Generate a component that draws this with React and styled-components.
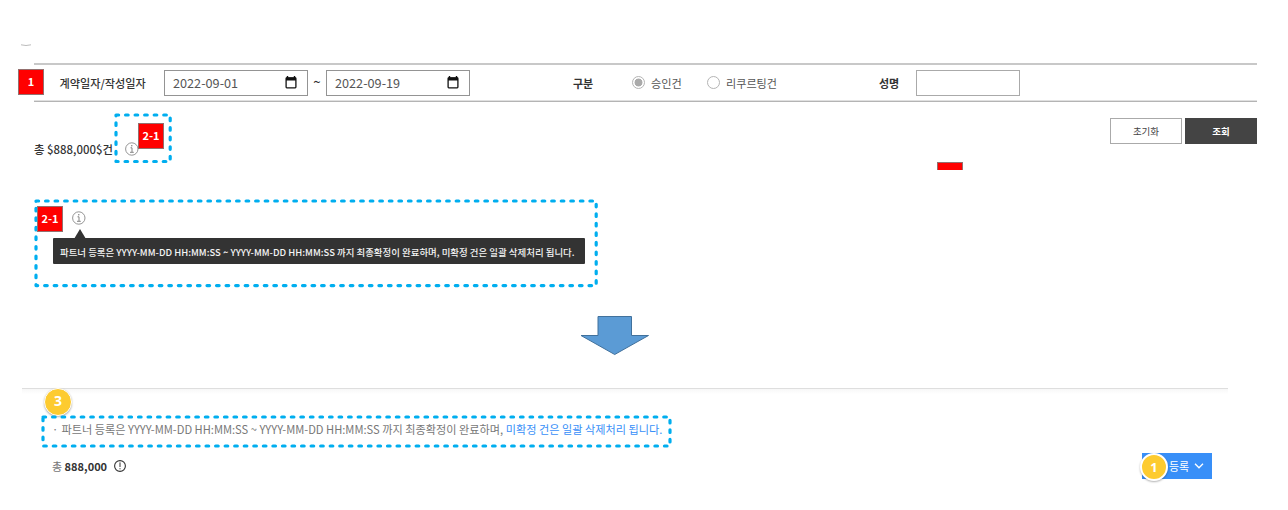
import React from "react";
import styled, { createGlobalStyle } from "styled-components";

const Global = createGlobalStyle`
  * { box-sizing: border-box; }
  body { margin: 0; background: #fff; }
`;

const Page = styled.main`
  position: relative;
  width: 1288px;
  height: 510px;
  overflow: hidden;
  display: flex;
  flex-direction: column;
  font-family: "Noto Sans CJK KR", "Noto Sans", sans-serif;
  font-size: 11px;
  color: #333;
`;

const Text = styled.span`
  white-space: pre;
  font-size: ${(p) => p.$size || 11}px;
  font-weight: ${(p) => p.$weight || 400};
  color: ${(p) => p.$color || "#333"};
  letter-spacing: ${(p) => p.$track || 0}px;
  line-height: 16px;
`;

const Cropped = styled.div`
  height: 63px;
  padding: 44px 0 0 21px;
`;

const FilterBar = styled.section`
  display: flex;
  align-items: center;
  width: 1223px;
  height: 39px;
  margin-left: 34px;
  padding-bottom: 1px;
  border-top: 2px solid #c8c8c8;
  border-bottom: 1px solid #b4b4b4;
  box-shadow: inset 0 -1px #e0e0e0;
`;

const Label = styled(Text)`
  width: ${(p) => p.$w}px;
  padding-left: ${(p) => p.$indent || 0}px;
  flex: none;
`;

const DateBox = styled.div`
  display: flex;
  align-items: center;
  justify-content: space-between;
  flex: none;
  width: ${(p) => p.$w}px;
  height: 26px;
  padding: 0 ${(p) => p.$end}px 0 8px;
  border: 1px solid #949494;
`;

const Tilde = styled(Text)`
  width: 18px;
  padding-bottom: 2px;
  text-align: center;
`;

const Radios = styled.div`
  display: flex;
  align-items: center;
  width: 247px;
`;

const Radio = styled.span`
  width: 13px;
  height: 13px;
  margin-right: 6px;
  border: 1px solid #b4b4b4;
  border-radius: 50%;
  background: ${(p) => (p.$on ? "radial-gradient(circle, #aaa 0 3.6px, #fff 4.3px)" : "#fff")};
`;

const NameInput = styled.div`
  width: 104px;
  height: 26px;
  border: 1px solid #aaa;
`;

const ResultRow = styled.section`
  display: flex;
  justify-content: space-between;
  height: 97px;
  padding: 16px 31px 0 34px;
`;

const Total = styled.div`
  display: flex;
  align-items: center;
  height: 16px;
  margin-top: ${(p) => p.$top || 0}px;
`;

const Actions = styled.div`
  display: flex;
  gap: 3px;
`;

const Button = styled.div`
  display: flex;
  align-items: center;
  justify-content: center;
  width: 72px;
  height: 26px;
  border: 1px solid ${(p) => (p.$dark ? "#444" : "#aaa")};
  background: ${(p) => (p.$dark ? "#444" : "#fff")};
`;

const TipSection = styled.section`
  height: 117px;
  padding: 12px 0 0 72px;
`;

const Tip = styled.div`
  position: relative;
  width: 532px;
  height: 26px;
  margin: 13px 0 0 -19px;
  padding: 6px 7px 4px;
  border-radius: 1px;
  background: #333;
  display: flex;
  align-items: center;
  &::before {
    content: "";
    position: absolute;
    left: 21px;
    top: -9px;
    border: solid transparent;
    border-width: 0 6.5px 10px;
    border-bottom-color: #333;
  }
`;

const ArrowRow = styled.div`
  height: 72px;
  padding-left: 580px;
`;

const Revised = styled.section`
  width: 1206px;
  height: 100px;
  margin-left: 22px;
  padding: 32px 16px 0 30px;
  border-top: 1px solid #dedede;
  background: linear-gradient(#f7f7f7, #fff 5px);
`;

const Notice = styled.div`
  display: flex;
  height: 16px;
`;

const Foot = styled.div`
  display: flex;
  justify-content: space-between;
  align-items: center;
  margin-top: 16px;
  height: 26px;
`;

const Register = styled.div`
  display: flex;
  align-items: center;
  gap: 5px;
  width: 70px;
  height: 26px;
  padding-left: 27px;
  background: #388ff8;
`;

const Marker = styled.div`
  position: absolute;
  left: ${(p) => p.$x}px;
  top: ${(p) => p.$y}px;
  width: 26px;
  height: ${(p) => p.$h || 26}px;
  padding-bottom: 2px;
  display: flex;
  align-items: center;
  justify-content: center;
  border: 1px solid #94706f;
  border-bottom-width: ${(p) => (p.$h ? 0 : 1)}px;
  background: #f00;
`;

const Badge = styled.div`
  position: absolute;
  left: ${(p) => p.$x}px;
  top: ${(p) => p.$y}px;
  width: 28px;
  height: 28px;
  display: flex;
  align-items: center;
  justify-content: center;
  border: ${(p) => p.$ring || 1}px solid #fff;
  border-radius: 50%;
  background: #fdcb30;
  box-shadow: 0 1px 2px rgba(0, 0, 0, 0.3);
  font: 700 ${(p) => p.$size || 14}px "Open Sans", sans-serif;
  line-height: 22px;
  padding-bottom: ${(p) => p.$lift || 0}px;
  color: #fff;
`;

const FrameSvg = styled.svg`
  position: absolute;
  left: ${(p) => p.$x}px;
  top: ${(p) => p.$y}px;
  overflow: visible;
`;

const Frame = ({ x, y, w, h }) => (
  <FrameSvg $x={x} $y={y} width={w} height={h}>
    <path
      d={`M0 0H${w}V${h}H0Z`}
      fill="none"
      stroke="#00aeef"
      strokeWidth="3.2"
      strokeLinecap="round"
      strokeLinejoin="round"
      strokeDasharray="2.6 6.95"
    />
  </FrameSvg>
);

const Glyph = styled.svg`
  display: block;
`;

const Calendar = () => (
  <Glyph width="12" height="13" viewBox="0 0 12 13">
    <path d="M2.5 0v2M9.5 0v2" stroke="#111" strokeWidth="1.4" />
    <rect x="1.1" y="1.9" width="9.8" height="9.9" rx=".7" fill="none" stroke="#111" strokeWidth="1.3" />
    <path d="M1 1.5h10v3H1z" fill="#111" />
  </Glyph>
);

const Info = () => (
  <Glyph width="14" height="14" viewBox="0 0 14 14">
    <circle cx="6.8" cy="7" r="6.2" fill="none" stroke="#888" strokeWidth=".9" />
    <path d="M5.5 5.8h1.5v4.4M5 10.3h3.8" fill="none" stroke="#777" strokeWidth=".9" />
    <circle cx="6.8" cy="3.7" r=".7" fill="#777" />
  </Glyph>
);

const Alert = () => (
  <Glyph width="12" height="12" viewBox="0 0 12 12">
    <circle cx="6" cy="6" r="5.4" fill="none" stroke="#333" strokeWidth="1.1" />
    <path d="M6 2.4v4.6M6 8.2v1.1" stroke="#333" strokeWidth="1" />
  </Glyph>
);

const InfoSlot = styled.span`
  margin-left: ${(p) => p.$gap}px;
  display: flex;
`;

export default function App() {
  return (
    <Page>
      <Global />
      <Cropped>
        <Glyph width="10" height="3" viewBox="0 0 10 3">
          <path d="M0 .8Q5 2.2 10 .8" fill="none" stroke="#bbb" />
        </Glyph>
      </Cropped>
      <FilterBar>
        <Label $w={130} $indent={25.5} $size={11.15} $weight={500}>계약일자/작성일자</Label>
        <DateBox $w={144} $end={10}>
          <Text $size={12.7} $color="#555">2022-09-01</Text>
          <Calendar />
        </DateBox>
        <Tilde $size={13} $weight={500}>~</Tilde>
        <DateBox $w={144} $end={10}>
          <Text $size={12.7} $color="#555">2022-09-19</Text>
          <Calendar />
        </DateBox>
        <Label $w={162} $indent={103} $weight={700}>구분</Label>
        <Radios>
          <Radio $on />
          <Label $w={56} $size={11.2} $color="#555">승인건</Label>
          <Radio />
          <Text $size={11.1} $color="#555">리쿠르팅건</Text>
        </Radios>
        <Label $w={37} $weight={700}>성명</Label>
        <NameInput />
      </FilterBar>
      <ResultRow>
        <Total $top={23}>
          <Text $weight={500} $size={11.4}>총 $888,000$건</Text>
          <InfoSlot $gap={12}><Info /></InfoSlot>
        </Total>
        <Actions>
          <Button><Text $size={9.5} $color="#444">초기화</Text></Button>
          <Button $dark><Text $size={9.5} $weight={700} $color="#fff">조회</Text></Button>
        </Actions>
      </ResultRow>
      <TipSection>
        <Info />
        <Tip>
          <Text $size={9.45} $color="#f4f4f4" $weight={500}>
            파트너 등록은 YYYY-MM-DD HH:MM:SS ~ YYYY-MM-DD HH:MM:SS 까지 최종확정이 완료하며, 미확정 건은 일괄 삭제처리 됩니다.
          </Text>
        </Tip>
      </TipSection>
      <ArrowRow>
        <Glyph width="70" height="40" viewBox="0 0 70 40">
          <path d="M18 .5H51.5V19.5H68.5L34.7 38.5L1 19.5H18Z" fill="#5b9bd5" stroke="#41719c" />
        </Glyph>
      </ArrowRow>
      <Revised>
        <Notice>
          <Text $size={11.2} $color="#777" $track={0.3}>· </Text>
          <Text $size={11.17} $color="#777">파트너 등록은 YYYY-MM-DD HH:MM:SS ~ YYYY-MM-DD HH:MM:SS 까지 최종확정이 완료하며, </Text>
          <Text $size={11.15} $color="#388ff8">미확정 건은 일괄 삭제처리 됩니다.</Text>
        </Notice>
        <Foot>
          <Total>
            <Text $color="#777">총 </Text>
            <Text $weight={700}>888,000</Text>
            <InfoSlot $gap={7}><Alert /></InfoSlot>
          </Total>
          <Register>
            <Text $color="#fff">등록</Text>
            <Glyph width="10" height="6" viewBox="0 0 10 6">
              <path d="M1 .8L5 4.8L9 .8" fill="none" stroke="#fff" strokeWidth="1.3" />
            </Glyph>
          </Register>
        </Foot>
      </Revised>

      <Frame x={116.1} y={114.8} w={54.2} h={46.5} />
      <Frame x={35.5} y={200.7} w={560.2} h={84.6} />
      <Marker $x={18} $y={69}><Text $weight={700} $color="#fff">1</Text></Marker>
      <Marker $x={138} $y={123}><Text $weight={700} $color="#fff">2-1</Text></Marker>
      <Marker $x={37} $y={206}><Text $weight={700} $color="#fff">2-1</Text></Marker>
      <Marker $x={937} $y={162} $h={8} />
      <Badge $x={44} $y={388} $lift={2}>3</Badge>
      <Frame x={43.3} y={416.6} w={627} h={29} />
      <Badge $x={1140} $y={453} $ring={2} $size={13}>1</Badge>
    </Page>
  );
}
